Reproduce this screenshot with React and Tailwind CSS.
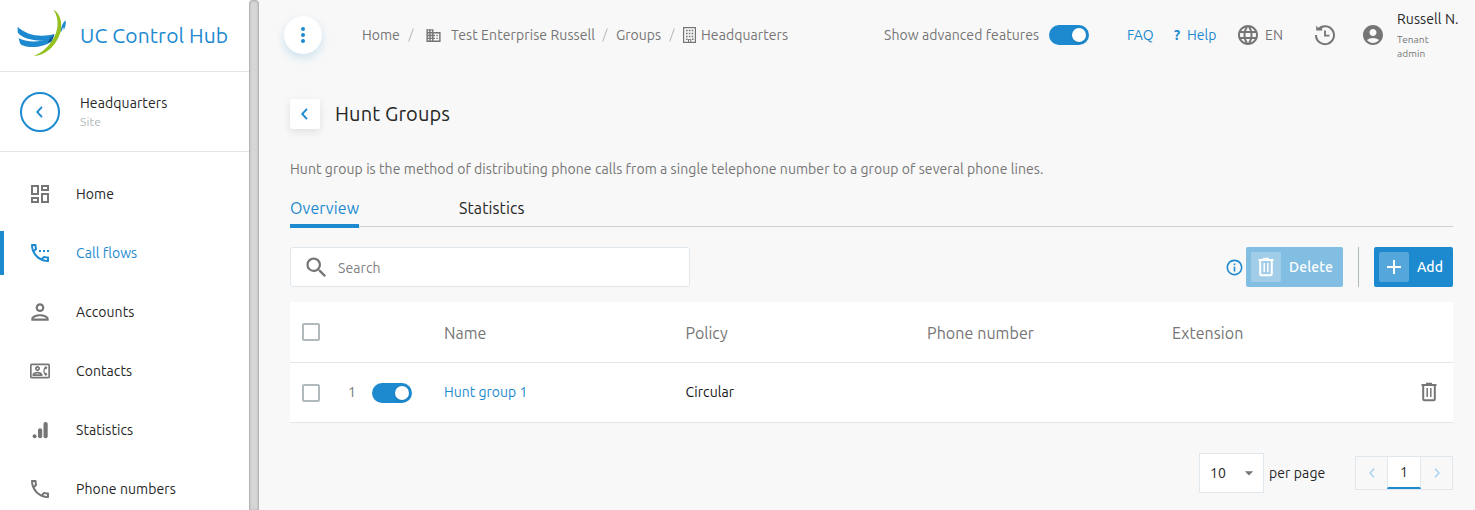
import { useState } from 'react';
import {
    MdOutlineDashboard,
    MdOutlineSettingsPhone,
    MdOutlinePerson,
    MdOutlineContactPhone,
    MdOutlinePhone,
    MdBusiness,
    MdLanguage,
    MdAccountCircle,
    MdSearch,
    MdInfoOutline,
    MdArrowDropDown,
    MdAdd,
} from 'react-icons/md';

const BarsIcon = () => (
    <svg width="20" height="20" viewBox="0 0 20 20" fill="currentColor">
        <circle cx="4.6" cy="16.2" r="2" />
        <rect x="8" y="8.3" width="4.2" height="10" rx="2" />
        <rect x="13.5" y="2" width="4.2" height="16.3" rx="2" />
    </svg>
);

const TrashIcon = () => (
    <svg width="20" height="20" viewBox="0 0 20 20" fill="none" stroke="currentColor" strokeWidth="2">
        <path d="M2.5 3H17.5M7 1.8H13" />
        <path d="M4.2 3V17Q4.2 18.2 5.4 18.2H14.6Q15.8 18.2 15.8 17V3" />
        <path d="M8.2 6V15M11.8 6V15" strokeWidth="1.5" />
    </svg>
);

const HistoryIcon = () => (
    <svg width="22" height="22" viewBox="0 0 22 22" fill="none" stroke="currentColor" strokeWidth="2">
        <path d="M4.2 5.3A9 9 0 1 1 2 11" />
        <path d="M2.2 1.2L3.6 3.5L8.2 4.3V6.6H2.2Z" fill="currentColor" stroke="none" />
        <path d="M11 6.5V11.7H15.5" strokeWidth="1.8" />
    </svg>
);

const BuildingIcon = () => (
    <svg width="13" height="16" viewBox="0 0 13 16" fill="none" stroke="currentColor">
        <rect x="0.6" y="0.6" width="11.8" height="14.8" strokeWidth="1.2" />
        <path d="M3 3.5H11M3 6.5H11M3 9.5H11M3 12.3H5M9 12.3H11" strokeWidth="1.5" strokeDasharray="1.6 1.2" />
        <path d="M5.5 15V12.5H7.8V15" />
    </svg>
);

const Chevron = ({ right, size = 10, color = '#1d8acf' }) => (
    <svg width={size * 0.6} height={size} viewBox="0 0 6 10" fill="none" stroke={color} strokeWidth="1.6">
        <path d={right ? 'M1 0.7L5 5L1 9.3' : 'M5 0.7L1 5L5 9.3'} />
    </svg>
);

const Logo = () => (
    <svg width="52" height="50" viewBox="48 24 156 150">
        <path d="M53 80C77 104 120 114 163 102L152 119C115 127 66 118 53 97Z" fill="#1d8acf" />
        <path d="M56 115C78 127 118 129 150 114L163 103L157 120C142 143 72 149 60 130Z" fill="#1d8acf" />
        <path d="M150 114L164 103L154 126L143 129Z" fill="#0f5c96" />
        <path d="M197 61C187 69 183 82 181 97L186 92C188 80 191 80 191 90C196 83 198 73 197 61Z" fill="#1d8acf" />
        <path d="M160 29C178 37 187 62 183 89C176 127 142 166 102 168C139 153 164 120 171 88C176 65 171 44 160 29Z" fill="#94c11f" />
    </svg>
);

const Toggle = ({ on, onClick }) => (
    <button onClick={onClick} className={`flex h-5 w-10 items-center rounded-full px-[3px] ${on ? 'justify-end bg-[#1d8acf]' : 'justify-start bg-gray-300'}`}>
        <span className="h-[14px] w-[14px] rounded-full bg-white shadow-sm" />
    </button>
);

const Checkbox = () => <span className="block h-[18px] w-[18px] rounded-xs border-2 border-[#b0b9bb]" />;

const Slash = () => (
    <svg width="6" height="14" viewBox="0 0 6 14" fill="none" stroke="#b5b5b5">
        <path d="M5.3 0.5L0.7 13.5" />
    </svg>
);

const navItems = [
    { label: 'Home', icon: <MdOutlineDashboard size={24} /> },
    { label: 'Call flows', icon: <MdOutlineSettingsPhone size={24} /> },
    { label: 'Accounts', icon: <MdOutlinePerson size={26} className="shrink-0" /> },
    { label: 'Contacts', icon: <MdOutlineContactPhone size={20} /> },
    { label: 'Statistics', icon: <BarsIcon /> },
    { label: 'Phone numbers', icon: <MdOutlinePhone size={24} /> },
];

function Sidebar() {
    return (
        <aside className="w-[249px] shrink-0 bg-white">
            <div className="flex h-[72px] items-center border-b border-[#e4e7e8] pl-4">
                <div className="mb-1.5"><Logo /></div>
                <span className="ml-3 text-[21px] tracking-[0.1px] text-[#1d8acf]">UC Control Hub</span>
            </div>
            <div className="flex h-20 items-center border-b border-[#e4e7e8] pl-5">
                <button className="flex h-10 w-10 items-center justify-center rounded-full border-2 border-[#1d8acf]">
                    <Chevron size={12} />
                </button>
                <div className="ml-5 pt-px">
                    <p className="text-sm leading-5 tracking-[0.1px]">Headquarters</p>
                    <p className="text-xs leading-[18px] tracking-[0.1px] text-[#b0b9bb]">Site</p>
                </div>
            </div>
            <nav className="flex flex-col gap-[15px] pt-5">
                {navItems.map((item) => (
                    <a
                        key={item.label}
                        className={`flex h-11 items-center border-l-4 text-sm ${item.label === 'Call flows' ? 'border-[#1d8acf] text-[#1d8acf]' : 'border-transparent'}`}
                    >
                        <span className={`ml-6 flex w-6 shrink-0 justify-center ${item.label === 'Call flows' ? '' : 'text-[#757575]'}`}>{item.icon}</span>
                        <span className="ml-6 tracking-[0.08px]">{item.label}</span>
                    </a>
                ))}
            </nav>
        </aside>
    );
}

function TopBar() {
    const [advanced, setAdvanced] = useState(true);

    return (
        <header className="flex h-[70px] items-center text-sm text-[#757575]">
            <button className="-ml-1.5 flex h-[38px] w-[38px] shrink-0 flex-col items-center justify-center gap-0.5 rounded-full bg-white shadow-[0_4px_10px_rgba(29,138,207,0.2)]">
                <span className="h-1 w-1 rounded-full bg-[#1d8acf]" />
                <span className="h-1 w-1 rounded-full bg-[#1d8acf]" />
                <span className="h-1 w-1 rounded-full bg-[#1d8acf]" />
            </button>

            {/* Breadcrumbs */}
            <div className="ml-10 flex w-[522px] shrink-0 items-center">
                <span className="w-[46px]">Home</span>
                <Slash />
                <MdBusiness size={17} className="ml-[11px]" />
                <span className="ml-[9px] w-[151px] tracking-[0.1px]">Test Enterprise Russell</span>
                <Slash />
                <span className="ml-2 w-[53px]">Groups</span>
                <Slash />
                <span className="ml-2"><BuildingIcon /></span>
                <span className="ml-[5px] tracking-[0.08px]">Headquarters</span>
            </div>

            <span className="w-[165px] shrink-0 tracking-[0.08px]">Show advanced features</span>
            <Toggle on={advanced} onClick={() => setAdvanced(!advanced)} />
            <a className="ml-[38px] w-[47px] text-[#1d8acf]">FAQ</a>
            <a className="flex w-16 text-[#1d8acf]">
                <span className="w-[13px] font-bold">?</span>
                <span>Help</span>
            </a>
            <MdLanguage size={24} className="-ml-0.5" />
            <span className="ml-[5px] w-[49px] tracking-[0.2px]">EN</span>
            <HistoryIcon />
            <MdAccountCircle size={24} className="ml-[25px]" />
            <div className="ml-3 w-14">
                <p className="mb-[3px] h-5 leading-[18px] tracking-[0.1px] whitespace-nowrap text-[#262626]">Russell N.</p>
                <p className="w-10 text-[10px] leading-[14px] tracking-[0.1px]">Tenant admin</p>
            </div>
        </header>
    );
}

function Toolbar() {
    return (
        <div className="mt-5 flex h-10 items-center">
            <div className="flex h-10 w-[400px] items-center rounded-[3px] border border-[#e0e8ee] bg-white pl-3">
                <MdSearch size={27} className="text-[#757575]" />
                <input
                    placeholder="Search"
                    className="mt-0.5 ml-2 w-80 text-sm tracking-[0.1px] outline-none placeholder:text-[#808080]"
                />
            </div>
            <MdInfoOutline size={19} className="mr-[2px] ml-auto text-[#1d8acf]" />
            <button className="flex h-10 w-[97px] items-center rounded-xs bg-[#82bde2] pl-[5px] text-sm font-medium tracking-[0.15px] text-white">
                <span className="mr-2 flex h-[30px] w-[30px] items-center justify-center rounded-xs bg-white/25"><TrashIcon /></span>
                Delete
            </button>
            <span className="mx-[15px] h-10 w-px bg-[#b0b9bb]" />
            <button className="flex h-10 w-[79px] items-center rounded-xs bg-[#1d8acf] pl-[5px] text-sm font-medium text-white">
                <span className="mr-2 flex h-[30px] w-[30px] items-center justify-center rounded-xs bg-white/25"><MdAdd size={24} /></span>
                Add
            </button>
        </div>
    );
}

function HuntTable() {
    const [enabled, setEnabled] = useState(true);
    const cols = 'grid grid-cols-[46px_24px_72px_241.5px_241.5px_245px_1fr] items-center border-b border-[#e0e8ee] pl-3';

    return (
        <div className="mt-[15px] bg-white">
            <div className={`${cols} h-[61px] text-base text-[#757575]`}>
                <Checkbox />
                <span />
                <span />
                <span className="pt-0.5">Name</span>
                <span className="pt-0.5">Policy</span>
                <span className="pt-0.5 tracking-[0.08px]">Phone number</span>
                <span className="pt-0.5 tracking-[0.08px]">Extension</span>
            </div>
            <div className={`${cols} h-[60px] text-sm`}>
                <Checkbox />
                <span className="pb-0.5 text-[#757575]">1</span>
                <Toggle on={enabled} onClick={() => setEnabled(!enabled)} />
                <a className="pb-0.5 text-[#1d8acf]">Hunt group 1</a>
                <span className="pb-0.5 tracking-[0.1px] text-[#151515]">Circular</span>
                <span />
                <span className="mr-3.5 justify-self-end pb-px text-[#757575]"><TrashIcon /></span>
            </div>
        </div>
    );
}

function Pagination() {
    return (
        <div className="mt-[30px] flex items-center justify-end text-sm">
            <div className="flex h-10 w-[65px] items-center justify-between border border-[#e0e8ee] bg-white pr-1 pl-2.5">
                10
                <MdArrowDropDown size={20} className="text-[#757575]" />
            </div>
            <span className="ml-[5px] w-[86px] tracking-[0.1px]">per page</span>
            <div className="flex h-[34px] w-[98px] border border-[#e0e8ee]">
                <span className="flex w-[31px] items-center justify-center"><Chevron color="#a8d2ee" /></span>
                <span className="flex w-[34px] items-center justify-center border-x border-b-2 border-x-[#e0e8ee] border-b-[#1d8acf] bg-white">1</span>
                <span className="flex w-[31px] items-center justify-center"><Chevron right color="#a8d2ee" /></span>
            </div>
        </div>
    );
}

export default function App() {
    const [tab, setTab] = useState('Overview');

    return (
        <div className="flex h-[510px] w-[1475px] overflow-hidden bg-[#f8f8f8] font-['Ubuntu','Noto_Sans',sans-serif] text-[#262626]">
            <Sidebar />
            <div className="w-2.5 shrink-0 rounded-t-[4px] border-x border-t border-[#b5b5b5] bg-[#d6d6d6] shadow-[inset_0_0_2px_#aaa]" />

            <main className="min-w-0 flex-1 pr-[22px] pl-[31px]">
                <TopBar />
                <div className="mt-[29px] flex h-[30px] items-center">
                    <button className="flex h-[30px] w-[30px] items-center justify-center rounded-xs bg-white shadow-[0_3px_8px_rgba(0,0,0,0.1)]">
                        <Chevron size={12} />
                    </button>
                    <h1 className="ml-[15px] text-xl tracking-[0.15px]">Hunt Groups</h1>
                </div>
                <p className="mt-[30px] text-sm leading-5 tracking-[0.07px] text-[#757575]">
                    Hunt group is the method of distributing phone calls from a single telephone number to a group of several phone lines.
                </p>

                {/* Tabs */}
                <div className="mt-[11px] flex h-[37px] gap-[100px] border-b border-[#d0d0d0] text-base">
                    {['Overview', 'Statistics'].map((name) => (
                        <button
                            key={name}
                            onClick={() => setTab(name)}
                            className={`h-[38px] border-b-4 pt-0.5 tracking-[0.1px] ${tab === name ? 'w-[69px] border-[#1d8acf] text-[#1d8acf]' : 'border-transparent'}`}
                        >
                            {name}
                        </button>
                    ))}
                </div>

                <Toolbar />
                <HuntTable />
                <Pagination />
            </main>
        </div>
    );
}
